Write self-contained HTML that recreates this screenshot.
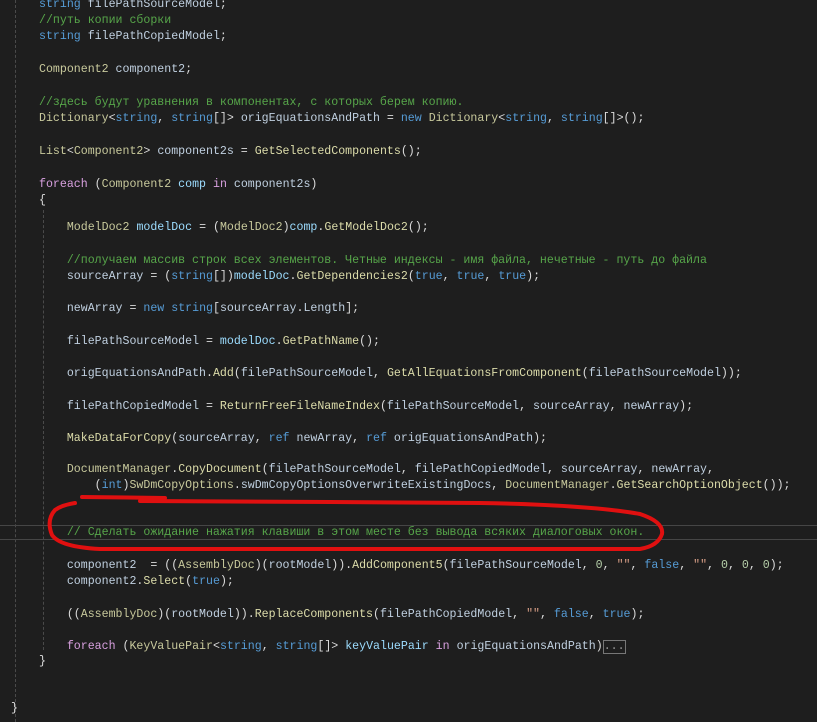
<!DOCTYPE html>
<html><head><meta charset="utf-8"><style>
html,body{margin:0;padding:0;background:#1e1e1e;width:817px;height:722px;overflow:hidden;position:relative}
.l{position:absolute;left:39px;white-space:pre;font-family:"Liberation Mono","DejaVu Sans Mono",monospace;font-size:11.6px;line-height:16px;color:#dcdcdc;height:16px}
.k{color:#569cd6}.c{color:#d8a0df}.t{color:#c8c99c}.m{color:#dcdcaa}.f{color:#c0d0e0}.v{color:#9cdcfe}.g{color:#57a64a}.s{color:#d69d85}.n{color:#b5cea8}
.guide{position:absolute;width:0;border-left:1px dashed #4a4a4a}
</style></head><body>
<div class="guide" style="left:15px;top:0;height:722px"></div>
<div class="guide" style="left:43px;top:210px;height:440px"></div>
<div style="position:absolute;left:0;top:525px;width:817px;height:13px;border-top:1px solid #464646;border-bottom:1px solid #464646"></div>

<div class="l" style="top:-3px"><span class="k">string</span> <span class="f">filePathSourceModel</span>;</div>
<div class="l g" style="top:13px">//путь копии сборки</div>
<div class="l" style="top:29px"><span class="k">string</span> <span class="f">filePathCopiedModel</span>;</div>
<div class="l" style="top:62px"><span class="t">Component2</span> <span class="f">component2</span>;</div>
<div class="l g" style="top:95px">//здесь будут уравнения в компонентах, с которых берем копию.</div>
<div class="l" style="top:111px"><span class="t">Dictionary</span>&lt;<span class="k">string</span>, <span class="k">string</span>[]&gt; <span class="f">origEquationsAndPath</span> = <span class="k">new</span> <span class="t">Dictionary</span>&lt;<span class="k">string</span>, <span class="k">string</span>[]&gt;();</div>
<div class="l" style="top:144px"><span class="t">List</span>&lt;<span class="t">Component2</span>&gt; <span class="f">component2s</span> = <span class="m">GetSelectedComponents</span>();</div>
<div class="l" style="top:177px"><span class="c">foreach</span> (<span class="t">Component2</span> <span class="v">comp</span> <span class="c">in</span> <span class="f">component2s</span>)</div>
<div class="l" style="top:193px">{</div>
<div class="l" style="top:220px">    <span class="t">ModelDoc2</span> <span class="v">modelDoc</span> = (<span class="t">ModelDoc2</span>)<span class="v">comp</span>.<span class="m">GetModelDoc2</span>();</div>
<div class="l g" style="top:253px">    //получаем массив строк всех элементов. Четные индексы - имя файла, нечетные - путь до файла</div>
<div class="l" style="top:269px">    <span class="f">sourceArray</span> = (<span class="k">string</span>[])<span class="v">modelDoc</span>.<span class="m">GetDependencies2</span>(<span class="k">true</span>, <span class="k">true</span>, <span class="k">true</span>);</div>
<div class="l" style="top:301px">    <span class="f">newArray</span> = <span class="k">new</span> <span class="k">string</span>[<span class="f">sourceArray</span>.<span class="f">Length</span>];</div>
<div class="l" style="top:334px">    <span class="f">filePathSourceModel</span> = <span class="v">modelDoc</span>.<span class="m">GetPathName</span>();</div>
<div class="l" style="top:366px">    <span class="f">origEquationsAndPath</span>.<span class="m">Add</span>(<span class="f">filePathSourceModel</span>, <span class="m">GetAllEquationsFromComponent</span>(<span class="f">filePathSourceModel</span>));</div>
<div class="l" style="top:399px">    <span class="f">filePathCopiedModel</span> = <span class="m">ReturnFreeFileNameIndex</span>(<span class="f">filePathSourceModel</span>, <span class="f">sourceArray</span>, <span class="f">newArray</span>);</div>
<div class="l" style="top:431px">    <span class="m">MakeDataForCopy</span>(<span class="f">sourceArray</span>, <span class="k">ref</span> <span class="f">newArray</span>, <span class="k">ref</span> <span class="f">origEquationsAndPath</span>);</div>
<div class="l" style="top:462px">    <span class="t">DocumentManager</span>.<span class="m">CopyDocument</span>(<span class="f">filePathSourceModel</span>, <span class="f">filePathCopiedModel</span>, <span class="f">sourceArray</span>, <span class="f">newArray</span>,</div>
<div class="l" style="top:478px">        (<span class="k">int</span>)<span class="t">SwDmCopyOptions</span>.<span class="f">swDmCopyOptionsOverwriteExistingDocs</span>, <span class="t">DocumentManager</span>.<span class="m">GetSearchOptionObject</span>());</div>
<div class="l g" style="top:525px">    // Сделать ожидание нажатия клавиши в этом месте без вывода всяких диалоговых окон.</div>
<div class="l" style="top:558px">    <span class="f">component2</span>  = ((<span class="t">AssemblyDoc</span>)(<span class="f">rootModel</span>)).<span class="m">AddComponent5</span>(<span class="f">filePathSourceModel</span>, <span class="n">0</span>, <span class="s">""</span>, <span class="k">false</span>, <span class="s">""</span>, <span class="n">0</span>, <span class="n">0</span>, <span class="n">0</span>);</div>
<div class="l" style="top:574px">    <span class="f">component2</span>.<span class="m">Select</span>(<span class="k">true</span>);</div>
<div class="l" style="top:607px">    ((<span class="t">AssemblyDoc</span>)(<span class="f">rootModel</span>)).<span class="m">ReplaceComponents</span>(<span class="f">filePathCopiedModel</span>, <span class="s">""</span>, <span class="k">false</span>, <span class="k">true</span>);</div>
<div class="l" style="top:639px">    <span class="c">foreach</span> (<span class="t">KeyValuePair</span>&lt;<span class="k">string</span>, <span class="k">string</span>[]&gt; <span class="v">keyValuePair</span> <span class="c">in</span> <span class="f">origEquationsAndPath</span>)<span style="border:1px solid #777;color:#999;line-height:12px;display:inline-block">...</span></div>
<div class="l" style="top:654px">}</div>
<div class="l" style="top:701px;left:11px">}</div>

<svg style="position:absolute;left:0;top:0" width="817" height="722">
<g fill="none" stroke="#e01010" stroke-width="4" stroke-linecap="round" stroke-linejoin="round">
<path d="M82 497 L165 498"/>
<path d="M140 501 L330 502"/>
<path d="M330 502 L480 503 Q590 505 640 514 Q664 522 662 534 Q658 546 640 549 L100 549 Q60 547 52 535 Q46 520 55 510 Q62 505 75 503"/>
</g>
</svg>
</body></html>
